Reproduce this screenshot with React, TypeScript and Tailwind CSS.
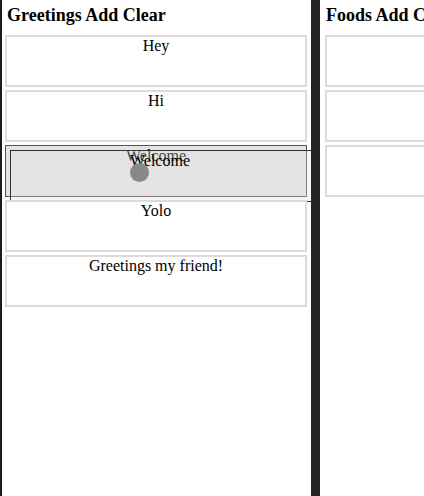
import React from "react";

const GREETINGS = ["Hey", "Hi", "Welcome", "Yolo", "Greetings my friend!"];
const FOODS = ["", "", ""];

function Card({ text, dragging }: { text: string; dragging?: boolean }) {
  return (
    <div
      className={`relative h-[52px] shrink-0 text-center text-[16px] leading-[18px] ${
        dragging
          ? "border border-[#555] bg-[#e4e4e4] pt-[1px]"
          : "border-2 border-[#dcdcdc] bg-white"
      }`}
    >
      {text}
      {dragging && (
        <div className="absolute left-[4px] top-[4px] w-[304px] h-[52px] border border-[#333] bg-[#e2e2e2]/30 pt-[1px] pr-[4px]">
          <span>{text}</span>
          <span className="absolute left-[119px] top-[12px] size-[19px] rounded-full bg-[#888]" />
        </div>
      )}
    </div>
  );
}

function Column({ title, items, dragIndex, className }: { title: string; items: string[]; dragIndex?: number; className: string }) {
  return (
    <div className={`flex flex-col gap-[3px] ${className}`}>
      <h3 className="h-[32px] pt-[4px] text-[18px] font-bold leading-[22px] whitespace-nowrap">{title}</h3>
      {items.map((t, i) => (
        <Card key={i} text={t} dragging={i === dragIndex} />
      ))}
    </div>
  );
}

export default function App() {
  return (
    <div className="flex h-[496px] w-[424px] overflow-hidden bg-white text-black font-['Liberation_Serif',serif]">
      <div className="w-[2px] shrink-0 bg-[#1c1c1c]" />
      <div className="w-[309px] shrink-0">
        <Column title="Greetings Add Clear" items={GREETINGS} dragIndex={2} className="pl-[3px] pr-[4px] [&>h3]:pl-[2px]" />
      </div>
      <div className="relative z-10 w-[9px] shrink-0 bg-[#242424]" />
      <div className="w-[300px] shrink-0">
        <Column title="Foods Add Clear" items={FOODS} className="pl-[5px] pr-[5px] [&>h3]:pl-[1px]" />
      </div>
    </div>
  );
}
